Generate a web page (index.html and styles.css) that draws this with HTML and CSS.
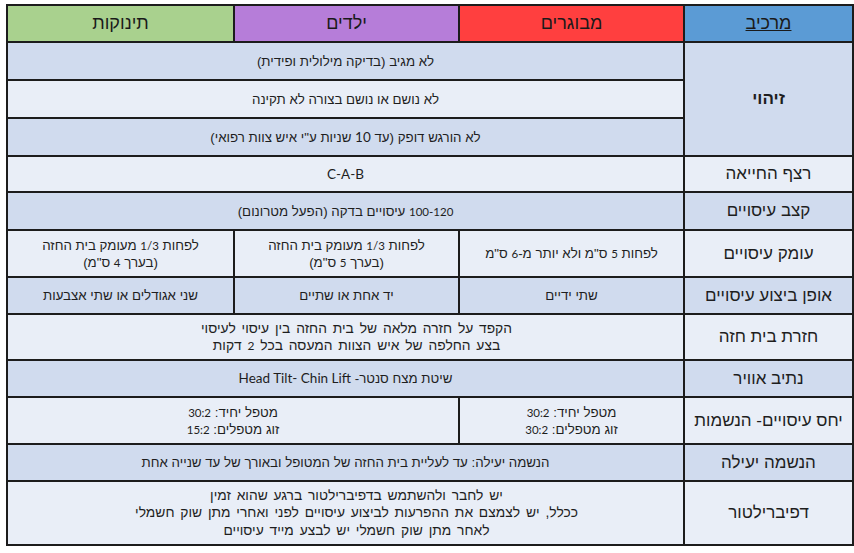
FILE: index.html
```html
<!DOCTYPE html>
<html lang="he" dir="rtl">
<head>
<meta charset="utf-8">
<title>החייאה</title>
<link rel="stylesheet" href="styles.css">
</head>
<body>
<table class="cpr">
  <colgroup>
    <col class="c-label">
    <col class="c-adult">
    <col class="c-child">
    <col class="c-infant">
  </colgroup>
  <thead>
    <tr class="h-row">
      <th class="h-blue"><u>מרכיב</u></th>
      <th class="h-red">מבוגרים</th>
      <th class="h-purple">ילדים</th>
      <th class="h-green">תינוקות</th>
    </tr>
  </thead>
  <tbody>
    <tr class="r38 dark">
      <td class="label bold" rowspan="3">זיהוי</td>
      <td colspan="3">לא מגיב (בדיקה מילולית ופידית)</td>
    </tr>
    <tr class="r38 light">
      <td colspan="3">לא נושם או נושם בצורה לא תקינה</td>
    </tr>
    <tr class="r38 dark">
      <td colspan="3">לא הורגש דופק (עד <span class="lat big">10</span> שניות ע"י איש צוות רפואי)</td>
    </tr>
    <tr class="r36 light">
      <td class="label">רצף החייאה</td>
      <td colspan="3"><span class="lat big">C-A-B</span></td>
    </tr>
    <tr class="r38 dark">
      <td class="label">קצב עיסויים</td>
      <td colspan="3"><span class="lat">100-120</span> עיסויים בדקה (הפעל מטרונום)</td>
    </tr>
    <tr class="r47 light">
      <td class="label">עומק עיסויים</td>
      <td>לפחות <span class="lat">5</span> ס"מ ולא יותר מ-<span class="lat">6</span> ס"מ</td>
      <td>לפחות <span class="lat">1/3</span> מעומק בית החזה<br>(בערך <span class="lat">5</span> ס"מ)</td>
      <td>לפחות <span class="lat">1/3</span> מעומק בית החזה<br>(בערך <span class="lat">4</span> ס"מ)</td>
    </tr>
    <tr class="r37 dark">
      <td class="label">אופן ביצוע עיסויים</td>
      <td>שתי ידיים</td>
      <td>יד אחת או שתיים</td>
      <td>שני אגודלים או שתי אצבעות</td>
    </tr>
    <tr class="r46 light">
      <td class="label">חזרת בית חזה</td>
      <td colspan="3" class="wide">הקפד על חזרה מלאה של בית החזה בין עיסוי לעיסוי<br>בצע החלפה של איש הצוות המעסה בכל <span class="lat">2</span> דקות</td>
    </tr>
    <tr class="r37 dark">
      <td class="label">נתיב אוויר</td>
      <td colspan="3">שיטת מצח סנטר- <span class="lat big">Head Tilt- Chin Lift</span></td>
    </tr>
    <tr class="r47 light">
      <td class="label">יחס עיסויים- הנשמות</td>
      <td>מטפל יחיד: <span class="lat">30:2</span><br>זוג מטפלים: <span class="lat">30:2</span></td>
      <td colspan="2">מטפל יחיד: <span class="lat">30:2</span><br>זוג מטפלים: <span class="lat">15:2</span></td>
    </tr>
    <tr class="r37 dark">
      <td class="label">הנשמה יעילה</td>
      <td colspan="3">הנשמה יעילה: עד לעליית בית החזה של המטופל ובאורך של עד שנייה אחת</td>
    </tr>
    <tr class="r64 light">
      <td class="label">דפיברילטור</td>
      <td colspan="3" class="wide">יש לחבר ולהשתמש בדפיברילטור ברגע שהוא זמין<br>ככלל, יש לצמצם את ההפרעות לביצוע עיסויים לפני ואחרי מתן שוק חשמלי<br>לאחר מתן שוק חשמלי יש לבצע מייד עיסויים</td>
    </tr>
  </tbody>
</table>
</body>
</html>
```

FILE: styles.css
```css
html, body {
  margin: 0;
  padding: 0;
  background: #ffffff;
}

body {
  padding: 4px 0 0 6px;
  font-family: "Liberation Sans", Arial, sans-serif;
  color: #1e1e1e;
}

.cpr {
  direction: rtl;
  border-collapse: collapse;
  table-layout: fixed;
  width: 846px;
}

.c-label { width: 169px; }
.c-adult { width: 225px; }
.c-child { width: 225px; }
.c-infant { width: 227px; }

.cpr th,
.cpr td {
  border: 2px solid #1c1c1c;
  padding: 0 4px;
  text-align: center;
  vertical-align: middle;
  box-sizing: border-box;
}

.cpr th {
  font-size: 18px;
  font-weight: normal;
  color: #1a1a1a;
  height: 37px;
}

.h-blue { background: #5b9bd5; }
.h-red { background: #ff3f3f; }
.h-purple { background: #b67dd9; }
.h-green { background: #a9d18e; }

.cpr td {
  font-size: 13.3px;
  line-height: 17px;
}

.cpr td.wide {
  font-size: 13.8px;
  word-spacing: 2px;
  line-height: 17.5px;
  padding-left: 26px;
}

.cpr td.label {
  font-size: 17px;
  line-height: 20px;
}

.cpr td.bold {
  font-weight: bold;
}

.dark td { background: #d0dbee; }
.light td { background: #e9eef7; }

.r36 td { height: 36px; }
.r37 td { height: 37px; }
.r38 td { height: 38px; }
.r46 td { height: 46px; }
.r47 td { height: 47px; }
.r64 td { height: 64px; }
.cpr td[rowspan] { height: auto; }

.lat {
  font-family: Lato, "Liberation Sans", sans-serif;
  font-size: 11.5px;
}

.wide .lat {
  font-size: 12px;
}

.lat.big {
  font-size: 13.5px;
}
```
